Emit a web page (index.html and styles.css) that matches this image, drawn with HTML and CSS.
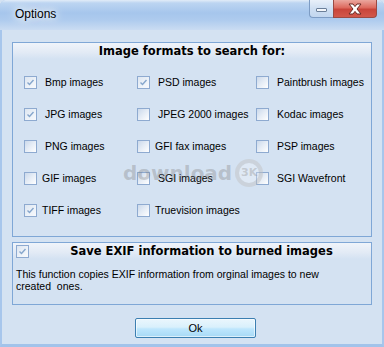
FILE: index.html
```html
<!DOCTYPE html>
<html>
<head>
<meta charset="utf-8">
<link rel="stylesheet" href="styles.css">
</head>
<body>
<div class="window">
  <div class="titlebar">
    <span class="title">Options</span>
    <div class="caption-buttons">
      <div class="btn-min"><span class="dash"></span></div>
      <div class="btn-close">
        <svg width="18" height="12" viewBox="0 0 18 12"><path d="M3 1h4l2 2.6L11 1h4l-4 5 4 5h-4l-2-2.6L7 11H3l4-5z" fill="#fff" stroke="#6b2a24" stroke-width="1" stroke-linejoin="round"/></svg>
      </div>
    </div>
  </div>
  <div class="client">
    <div class="group formats">
      <div class="group-head">Image formats to search for:</div>
      <div class="grid">
        <label class="opt"><span class="cb checked"><svg width="11" height="11" viewBox="0 0 11 11"><path d="M2.5 5.5l2 2 4-4.5" fill="none" stroke="#86a6cc" stroke-width="1.4"/></svg></span><span class="lbl sp">Bmp images</span></label>
        <label class="opt"><span class="cb checked"><svg width="11" height="11" viewBox="0 0 11 11"><path d="M2.5 5.5l2 2 4-4.5" fill="none" stroke="#86a6cc" stroke-width="1.4"/></svg></span><span class="lbl sp">PSD images</span></label>
        <label class="opt"><span class="cb"></span><span class="lbl sp">Paintbrush images</span></label>

        <label class="opt"><span class="cb checked"><svg width="11" height="11" viewBox="0 0 11 11"><path d="M2.5 5.5l2 2 4-4.5" fill="none" stroke="#86a6cc" stroke-width="1.4"/></svg></span><span class="lbl sp">JPG images</span></label>
        <label class="opt"><span class="cb"></span><span class="lbl sp">JPEG 2000 images</span></label>
        <label class="opt"><span class="cb"></span><span class="lbl sp">Kodac images</span></label>

        <label class="opt"><span class="cb"></span><span class="lbl sp">PNG images</span></label>
        <label class="opt"><span class="cb"></span><span class="lbl">GFI fax images</span></label>
        <label class="opt"><span class="cb"></span><span class="lbl sp">PSP images</span></label>

        <label class="opt"><span class="cb"></span><span class="lbl">GIF images</span></label>
        <label class="opt"><span class="cb"></span><span class="lbl sp">SGI images</span></label>
        <label class="opt"><span class="cb"></span><span class="lbl sp">SGI Wavefront</span></label>

        <label class="opt"><span class="cb checked"><svg width="11" height="11" viewBox="0 0 11 11"><path d="M2.5 5.5l2 2 4-4.5" fill="none" stroke="#86a6cc" stroke-width="1.4"/></svg></span><span class="lbl">TIFF images</span></label>
        <label class="opt"><span class="cb"></span><span class="lbl">Truevision images</span></label>
      </div>
    </div>
    <div class="group exif">
      <div class="group-head exif-head">
        <span class="cb checked head-cb"><svg width="11" height="11" viewBox="0 0 11 11"><path d="M2.5 5.5l2 2 4-4.5" fill="none" stroke="#86a6cc" stroke-width="1.4"/></svg></span>
        Save EXIF information to burned images
      </div>
      <p class="desc">This function copies EXIF information from orginal images to new<br>created&nbsp; ones.</p>
    </div>
    <div class="ok">Ok</div>
  </div>
  <div class="watermark"><span class="wm-text">download</span><span class="wm-circle">3K</span></div>
</div>
</body>
</html>
```
FILE: styles.css
```css
* { box-sizing: border-box; }
html, body { margin: 0; padding: 0; }
body { width: 384px; height: 347px; overflow: hidden; background: #d4e2f2; }

.window {
  position: relative;
  width: 384px;
  height: 347px;
  display: flex;
  flex-direction: column;
  background: #d4e2f2;
  border-left: 2px solid #a7c6ec;
  border-right: 2px solid #a7c6ec;
  border-bottom: 3px solid #a2c3ea;
  border-radius: 6px 6px 0 0;
  font-family: "Liberation Sans", Arial, sans-serif;
  color: #000;
}

.titlebar {
  height: 30px;
  flex: none;
  margin: 0 -2px;
  border-radius: 6px 6px 0 0;
  background: linear-gradient(#e2ecf8 0, #bcd5f1 3px, #a6c6ec 13px, #aecbee 20px, #cadcf2 30px);
  position: relative;
  display: flex;
  align-items: flex-start;
}

.title {
  margin: 6px 0 0 15px;
  font-size: 12px;
  line-height: 16px;
  color: #000;
  text-shadow: 0 0 6px #fff, 0 0 10px #fff, 0 0 14px #eaf2fb;
}

.caption-buttons {
  margin-left: auto;
  margin-right: 7px;
  display: flex;
  height: 18px;
}

.btn-min {
  width: 24px;
  height: 18px;
  border: 1px solid #7d9cc4;
  border-top: none;
  border-right: none;
  border-radius: 0 0 0 4px;
  background: linear-gradient(#e9f0f9, #cfdff2 50%, #c2d6ef);
  display: flex;
  align-items: center;
  justify-content: center;
}
.dash {
  width: 11px;
  height: 4px;
  margin-top: 3px;
  border: 1px solid #6b7f99;
  border-radius: 1px;
  background: #f4f7fb;
}

.btn-close {
  width: 44px;
  height: 18px;
  border: 1px solid #9b4a43;
  border-top: none;
  border-radius: 0 0 4px 0;
  background: linear-gradient(#eba79e, #dd6a5e 45%, #c9453a 55%, #d2584b);
  display: flex;
  align-items: center;
  justify-content: center;
}

.client {
  flex: 1;
  padding: 12px 10px 0 10px;
  display: flex;
  flex-direction: column;
}

.group {
  border: 1px solid #7fa7d6;
  background: #d4e2f2;
}

.group-head {
  height: 16px;
  background: linear-gradient(#f0f4fa, #e2eaf5 60%, #d4e2f2);
  font-family: "DejaVu Sans", Verdana, sans-serif;
  font-weight: bold;
  font-size: 11.5px;
  line-height: 16px;
  text-align: center;
  color: #000;
}

.grid {
  display: grid;
  grid-template-columns: 113px 119px 1fr;
  grid-auto-rows: 32px;
  padding: 7px 0 10px 11px;
}

.opt {
  display: flex;
  align-items: center;
  font-size: 10.5px;
  color: #000;
}

.cb {
  width: 13px;
  height: 13px;
  flex: none;
  border: 1px solid #8eaad0;
  background: linear-gradient(135deg, #cbd9eb 0%, #e6edf6 50%, #ffffff 100%);
  display: inline-flex;
  align-items: center;
  justify-content: center;
}
.cb.checked { background: linear-gradient(135deg, #dde6f1 0%, #eef3f9 60%, #f7f9fc 100%); }

.lbl { margin-left: 5px; white-space: nowrap; }
.lbl.sp { margin-left: 8px; }

.exif { margin-top: 5px; }
.exif-head { position: relative; padding-left: 19px; }
.head-cb { position: absolute; left: 3px; top: 2px; }

.desc {
  margin: 0;
  padding: 9px 0 12px 3px;
  font-size: 10.5px;
  line-height: 12px;
  color: #000;
}

.ok {
  margin: 13px 0 0 123px;
  width: 121px;
  height: 20px;
  border: 1px solid #3c7fb1;
  border-radius: 2px;
  background: linear-gradient(#eaf6fd, #d9f0fc 45%, #bee6fd 55%, #a7d9f5);
  box-shadow: inset 0 0 0 1px rgba(255,255,255,0.6);
  font-size: 11px;
  line-height: 18px;
  text-align: center;
  color: #000;
}

.watermark {
  position: absolute;
  left: 121px;
  top: 159px;
  display: flex;
  align-items: center;
  pointer-events: none;
}
.wm-text {
  font-family: "DejaVu Sans", sans-serif;
  font-weight: bold;
  font-size: 20px;
  color: rgba(120,120,120,0.33);
}
.wm-circle {
  margin-left: 3px;
  width: 28px;
  height: 28px;
  border-radius: 50%;
  border: 4px solid rgba(150,150,150,0.28);
  background: rgba(255,255,255,0.25);
  font-family: "DejaVu Sans", sans-serif;
  font-weight: bold;
  font-size: 11px;
  line-height: 20px;
  text-align: center;
  color: rgba(150,150,150,0.4);
}
```
